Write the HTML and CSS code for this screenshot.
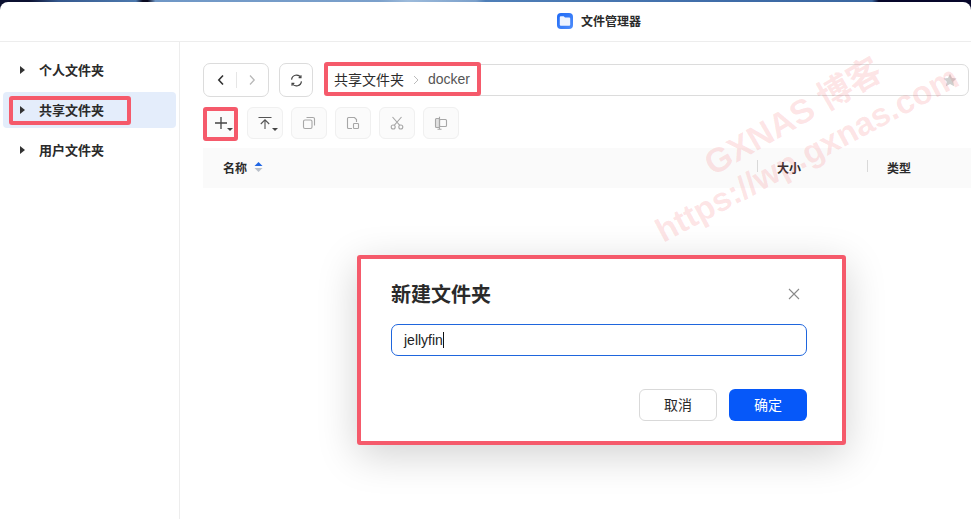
FILE: index.html
```html
<!DOCTYPE html>
<html lang="zh">
<head>
<meta charset="utf-8">
<title>文件管理器</title>
<link rel="stylesheet" href="styles.css">
</head>
<body>
<div class="topstrip"></div>
<div class="window">
  <header class="titlebar">
    <svg class="appicon" width="16" height="16" viewBox="0 0 16 16"><defs><linearGradient id="appblue" x1="0" y1="0" x2="1" y2="1"><stop offset="0" stop-color="#1f6af5"/><stop offset="1" stop-color="#4f8dfb"/></linearGradient></defs><rect width="16" height="16" rx="4" fill="url(#appblue)"/><path d="M2.800 4.300a1 1 0 0 1 1-1h2.900l1.300 1.300h4.200a1 1 0 0 1 1 1v6.100a1 1 0 0 1-1 1H3.800a1 1 0 0 1-1-1z" fill="#eef4ff"/></svg>
    <span class="apptitle">文件管理器</span>
  </header>
  <div class="body">
    <aside class="side">
      <div class="tree"><i class="caret"></i><span>个人文件夹</span></div>
      <div class="tree active"><i class="caret"></i><span>共享文件夹</span><b class="mark mark-side"></b></div>
      <div class="tree"><i class="caret"></i><span>用户文件夹</span></div>
    </aside>
    <main class="main">
      <div class="navrow">
        <div class="btn navpair">
          <svg width="8" height="12" viewBox="0 0 8 12"><path d="M6 1.500 1.800 6 6 10.500" fill="none" stroke="#333" stroke-width="1.600"/></svg>
          <i class="vsep"></i>
          <svg width="8" height="12" viewBox="0 0 8 12"><path d="M2 1.500 6.200 6 2 10.500" fill="none" stroke="#b8b8b8" stroke-width="1.300"/></svg>
        </div>
        <div class="btn refresh">
          <svg width="13" height="13" viewBox="0 0 14 14" fill="none" stroke="#444" stroke-width="1.300"><path d="M1.700 6A5.400 5.400 0 0 1 11.500 3.500"/><path d="M12.300 8A5.400 5.400 0 0 1 2.500 10.500"/><path d="M11.800 1.300v2.500H9.300M2.200 12.700v-2.500h2.500"/></svg>
        </div>
        <div class="path">
          <span class="crumb">共享文件夹</span>
          <svg class="chev" width="6" height="10" viewBox="0 0 6 10"><path d="M1 1l4 4-4 4" fill="none" stroke="#bbb" stroke-width="1"/></svg>
          <span class="crumb dim">docker</span>
          <b class="mark mark-path"></b>
          <svg class="star" width="14" height="14" viewBox="0 0 14 14"><path d="M7 .8 9 5l4.500.6-3.300 3.100.9 4.500L7 11l-4.100 2.200.9-4.500L.5 5.600 5 5z" fill="#cfcfcf"/></svg>
        </div>
      </div>
      <div class="toolrow">
        <div class="tool plus">
          <svg width="14" height="14" viewBox="0 0 14 14"><path d="M7 1v12M1 7h12" stroke="#444" stroke-width="1.300"/></svg>
          <i class="drop"></i>
          <b class="mark mark-plus"></b>
        </div>
        <div class="tool">
          <svg width="14" height="14" viewBox="0 0 14 14" fill="none" stroke="#555" stroke-width="1.100"><path d="M.5 1.500h13M7 13V4M2.800 8 7 3.800 11.200 8"/></svg>
          <i class="drop"></i>
        </div>
        <div class="tool off">
          <svg width="14" height="14" viewBox="0 0 14 14" fill="none" stroke="#999" stroke-width="1.100"><rect x="1.500" y="4" width="8.500" height="8.500" rx="1.500"/><path d="M4.500 1.500h6.500a1.500 1.500 0 0 1 1.500 1.500v6.500"/></svg>
        </div>
        <div class="tool off">
          <svg width="14" height="14" viewBox="0 0 14 14" fill="none" stroke="#999" stroke-width="1.100"><path d="M6 12.500H2.500a1 1 0 0 1-1-1v-9a1 1 0 0 1 1-1h6l2 2v2.500"/><rect x="7.500" y="7.500" width="5" height="5" rx=".8"/></svg>
        </div>
        <div class="tool off">
          <svg width="14" height="14" viewBox="0 0 14 14" fill="none" stroke="#999" stroke-width="1.100"><circle cx="3.200" cy="11" r="2"/><circle cx="10.800" cy="11" r="2"/><path d="M2.500 1 9.800 9.300M11.500 1 4.200 9.300"/></svg>
        </div>
        <div class="tool off">
          <svg width="14" height="14" viewBox="0 0 14 14" fill="none" stroke="#999" stroke-width="1.100"><rect x="1.500" y="2.500" width="4" height="9" rx="1" fill="#ddd"/><rect x="5.500" y="3.500" width="7" height="7" rx="1"/><path d="M5.500 .8v12.400M3.500 13.200h4"/></svg>
        </div>
      </div>
      <div class="thead">
        <div class="th name">名称
          <svg class="sort" width="9" height="12" viewBox="0 0 9 12"><path d="M4.500 1 8.500 5H.5z" fill="#1f66e5"/><path d="M4.500 11 8.500 7H.5z" fill="#b9bfc9"/></svg>
        </div>
        <div class="th size">大小</div>
        <div class="th type">类型</div>
      </div>
    </main>
  </div>
</div>

<div class="wm wm1">GXNAS 博客</div>
<div class="wm wm2">https://wp.gxnas.com</div>

<section class="dialog">
  <div class="dlg-head">
    <h2>新建文件夹</h2>
    <svg width="12" height="12" viewBox="0 0 12 12"><path d="M1 1l10 10M11 1 1 11" stroke="#8a8a8a" stroke-width="1.100"/></svg>
  </div>
  <div class="field">jellyfin<i class="cursor"></i></div>
  <div class="actions">
    <div class="dbtn cancel">取消</div>
    <div class="dbtn ok">确定</div>
  </div>
</section>
</body>
</html>
```
FILE: styles.css
```css
* { box-sizing: border-box; }
html, body { margin: 0; height: 100%; }
body {
  width: 971px; height: 519px; overflow: hidden; position: relative;
  background: #fff; color: #222;
  font-family: "Liberation Sans", "Noto Sans CJK SC", sans-serif;
  font-size: 13px;
}
.topstrip {
  position: absolute; left: 0; top: 0; width: 100%; height: 10px;
  background: linear-gradient(90deg, #0b1030 0, #0b1030 3%, #35598f 6%, #4c78ad 14%, #0b0b22 14.700%, #0b0b22 15.200%, #6f97c6 16%, #7ba0cb 39%, #9dbbdb 42%, #7ba0cb 49%, #4f7fb8 50%, #3f6ca8 75%, #3a669f 89.800%, #07072a 90.500%, #07072a 100%);
}
.window {
  position: relative; background: #fff; height: 517px; margin-top: 2px;
  border-top-left-radius: 8px; border-top-right-radius: 8px;
}
.titlebar {
  height: 40px; display: flex; align-items: center; justify-content: center;
  gap: 8px; border-bottom: 1px solid #ededed; padding-left: 227px; padding-bottom: 1px;
}
.apptitle { font-size: 12px; font-weight: 700; color: #2b2b2b; margin-top: -2px; }
.appicon { flex: none; }
.body { display: flex; height: 477px; }
.side {
  width: 180px; flex: none; border-right: 1px solid #ededed;
  padding: 10px 3px 0 3px; display: flex; flex-direction: column; gap: 4px;
}
.tree {
  height: 36px; display: flex; align-items: center; gap: 14px; padding-left: 17px;
  font-weight: 700; font-size: 13px; color: #2a2a2a; border-radius: 4px; position: relative;
}
.tree span { margin-top: -2px; }
.tree.active { background: #e4edfb; }
.caret {
  width: 0; height: 0; border-left: 5px solid #333;
  border-top: 4px solid transparent; border-bottom: 4px solid transparent;
}
.mark { position: absolute; border: 4px solid #f55a6b; border-radius: 3px; pointer-events: none; }
.mark-side { left: 6px; top: 4px; width: 122px; height: 29px; }
.main { flex: 1; padding: 21px 0 0 23px; min-width: 0; }
.navrow { display: flex; gap: 10px; height: 34px; }
.btn {
  border: 1px solid #dcdcdc; border-radius: 7px; height: 34px;
  display: flex; align-items: center; justify-content: center;
}
.navpair { width: 66px; gap: 11px; }
.vsep { width: 1px; height: 16px; background: #e6e6e6; }
.refresh { width: 34px; }
.path {
  flex: 1; margin-left: 1px; margin-right: 2px; position: relative; height: 32px; margin-top: 1px;
  display: flex; align-items: center; gap: 9px; padding: 0 0 3px 9px;
  border: 1px solid #dcdcdc; border-radius: 7px;
}
.crumb { font-size: 14px; color: #2c2c2c; }
.crumb.dim { color: #555; }
.chev { flex: none; margin: 3px 0 0 0; }
.mark-path { left: -1px; top: -3px; width: 157px; height: 34px; }
.star { position: absolute; right: 11px; top: 8px; }
.toolrow { display: flex; gap: 8px; margin-top: 10px; height: 32px; }
.tool {
  width: 36px; height: 32px; border: 1px solid #f0f0f0; border-radius: 6px; background: #fbfbfb;
  display: flex; align-items: center; justify-content: center; position: relative;
}
.tool.plus { width: 35px; border-color: transparent; margin-right: 1px; }
.tool.off svg { opacity: .85; }
.drop {
  position: absolute; right: 4px; bottom: 7px; width: 0; height: 0;
  border-top: 3px solid #444; border-left: 3px solid transparent; border-right: 3px solid transparent;
}
.mark-plus { left: -1px; top: -1px; width: 35px; height: 34px; }
.thead {
  margin-top: 9px; height: 40px; background: #fafafa; display: flex; align-items: center;
  font-size: 12px; font-weight: 700; color: #2b2b2b; padding-bottom: 2px;
}
.th { display: flex; align-items: center; }
.name { width: 554px; flex: none; padding-left: 20px; gap: 7px; }
.size, .type { position: relative; }
.size { width: 110px; flex: none; padding-left: 20px; }
.type { padding-left: 20px; }
.size::before, .type::before {
  content: ""; position: absolute; left: 0; top: 1px; width: 1px; height: 12px; background: #d9d9d9;
}
.wm {
  position: absolute; white-space: nowrap; color: rgba(245, 90, 100, .17);
  font-weight: 700; transform-origin: left bottom;
  font-family: "Liberation Sans", "Noto Sans CJK SC", sans-serif;
}
.wm1 { left: 718px; top: 136px; font-size: 34px; transform: rotate(-30deg); }
.wm2 { left: 667px; top: 212px; font-size: 33px; transform: rotate(-28deg); }
.dialog {
  position: absolute; left: 357px; top: 255px; width: 489px; height: 190px;
  background: #fff; border: 4px solid #f55a6b; border-radius: 3px;
  box-shadow: 0 10px 40px rgba(0, 0, 0, .18);
  padding: 22px 35px 0 30px;
}
.dlg-head { display: flex; align-items: center; justify-content: space-between; padding-top: 2px; height: 26px; }
.dlg-head svg { margin-right: 7px; margin-top: -2px; }
h2 { margin: 0; font-size: 20px; font-weight: 700; color: #2a2a2a; line-height: 26px; }
.field {
  margin-top: 17px; height: 32px; border: 1px solid #1f66dd; border-radius: 7px;
  display: flex; align-items: center; padding-left: 12px; font-size: 14px; color: #222;
}
.cursor { width: 1px; height: 16px; background: #111; }
.actions { display: flex; justify-content: flex-end; gap: 12px; margin-top: 33px; }
.dbtn {
  width: 78px; height: 32px; border-radius: 6px; display: flex; align-items: center; justify-content: center;
  font-size: 14px; padding-bottom: 2px;
}
.cancel { border: 1px solid #d9d9d9; color: #2a2a2a; }
.ok { background: #0658f9; color: #fff; }
```
